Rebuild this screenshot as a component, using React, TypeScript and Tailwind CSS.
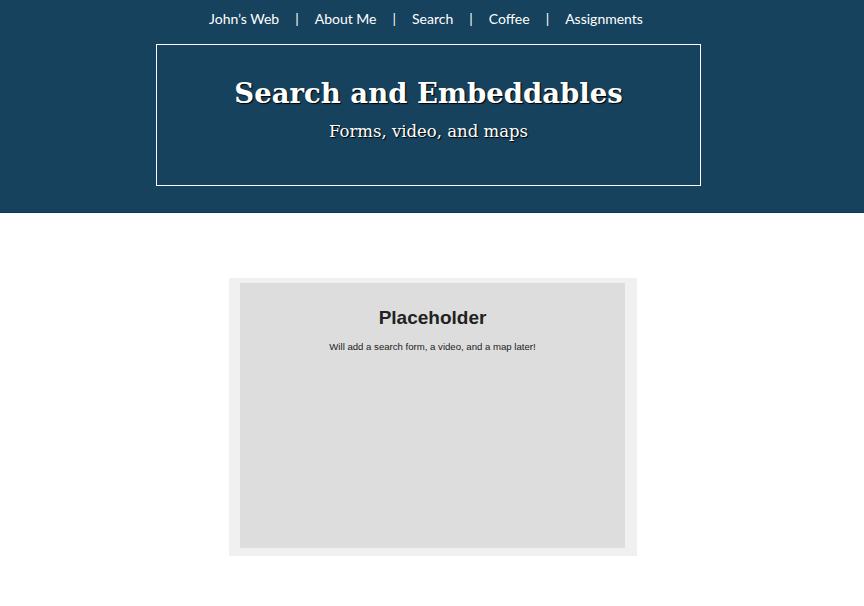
export default function App() {
  const nav = ["John’s Web", "About Me", "Search", "Coffee", "Assignments"];
  return (
    <div className="w-[864px] h-[606px] bg-white overflow-hidden">
      <header className="bg-[#16425e] h-[213px] border-b border-[#0e3450] flex flex-col items-center">
        <nav className="mr-[12px] flex items-center h-[37px] text-[14px] text-white" style={{ fontFamily: "Lato, 'Open Sans', sans-serif" }}>
          {nav.map((n, i) => (
            <div key={n} className="flex items-center">
              {i > 0 && <span className="mx-[16px]">|</span>}
              <span>{n}</span>
            </div>
          ))}
        </nav>
        <div className="mr-[7px] mt-[7px] w-[545px] h-[142px] border border-white flex flex-col items-center text-white" style={{ fontFamily: "'DejaVu Serif', Georgia, serif" }}>
          <h1 className="mt-[29px] text-[27.5px] font-bold leading-[38px] [text-shadow:1px_1px_1px_#000]">Search and Embeddables</h1>
          <p className="mt-[8px] text-[16.5px] leading-[24px] [text-shadow:1px_1px_1px_#000]">Forms, video, and maps</p>
        </div>
      </header>
      <main className="flex justify-center pt-[65px]">
        <div className="ml-[2px] w-[408px] h-[278px] bg-[#f0f0f0] pt-[5px] pl-[11px] pr-[12px] pb-[8px]">
          <div className="h-full bg-[#dddddd] flex flex-col items-center text-[#222]" style={{ fontFamily: "'Liberation Sans', Arial, sans-serif" }}>
            <h2 className="mt-[23px] text-[19px] font-bold leading-[24px]">Placeholder</h2>
            <p className="mt-[11px] text-[9.6px] leading-[12px]">Will add a search form, a video, and a map later!</p>
          </div>
        </div>
      </main>
    </div>
  );
}
